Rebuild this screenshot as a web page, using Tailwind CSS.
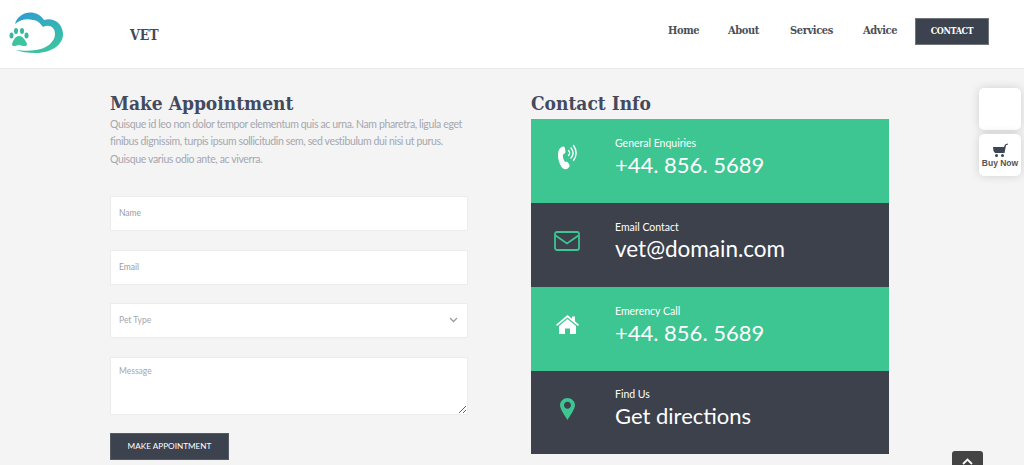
<!DOCTYPE html>
<html lang="en">
<head>
    <meta charset="UTF-8">
    <meta name="viewport" content="width=device-width, initial-scale=1.0">
    <title>Vet - Contact</title>
    <script src="https://cdn.jsdelivr.net/npm/@tailwindcss/browser@4"></script>
</head>
<body class="bg-[#f4f4f4] font-['Lato',sans-serif] h-[465px] overflow-hidden relative">

    <!-- Header -->
    <header class="bg-white h-[69px] border-b border-[#ebebeb] flex items-center">
        <svg class="w-[70px] h-[60px] -mt-[4px] shrink-0" viewBox="0 0 70 60">
            <defs>
                <linearGradient id="logo" x1="0.2" y1="0" x2="0.7" y2="1">
                    <stop offset="0" stop-color="#2f9fd0"/>
                    <stop offset="1" stop-color="#3cc5a0"/>
                </linearGradient>
            </defs>
            <path fill="url(#logo)" d="M15 22C17 14 26 9 34 11C39 12 42 15 44 18C52 15 62 20 63 31C64 42 52 51 36 51C28 51 21 50 16 48C24 49 30 49 36 48C46 47 55 40 55 32C55 25 49 22 43 25C40 21 37 18 33 18C26 16 20 18 15 22Z"/>
            <g fill="#3bb79f">
                <ellipse cx="11.5" cy="33.5" rx="2" ry="3"/>
                <ellipse cx="16" cy="29" rx="2" ry="3"/>
                <ellipse cx="22" cy="29" rx="2" ry="3"/>
                <ellipse cx="26.5" cy="33.5" rx="2" ry="3"/>
                <path fill="#3cc5a0" d="M19 34C23 34 26 39 27 42C27 45 23 44 19 43C15 44 12 45 12 42C13 39 15 34 19 34Z"/>
            </g>
        </svg>
        <span class="font-['DejaVu_Serif',serif] [font-stretch:condensed] font-bold text-[14px] text-[#444a58] ml-[60px] mt-[2px]">VET</span>
        <nav class="ml-auto mr-[35px] -mt-[5px] flex items-center font-['DejaVu_Serif',serif] [font-stretch:condensed] font-bold text-[11px] tracking-[-0.4px] text-[#4b4f58]">
            <a class="w-[29px] mr-[31px] whitespace-nowrap">Home</a>
            <a class="w-[31px] mr-[31px] whitespace-nowrap">About</a>
            <a class="w-[42px] mr-[31px] whitespace-nowrap">Services</a>
            <a class="w-[34px] mr-[18px] whitespace-nowrap">Advice</a>
            <a class="w-[74px] h-[27px] bg-[#3c424e] border border-[#6f747d] text-white text-[9px] flex items-center justify-center">CONTACT</a>
        </nav>
    </header>

    <main class="pl-[110px] flex gap-[63px]">
        <!-- Appointment form -->
        <section class="w-[358px]">
            <h2 class="font-['DejaVu_Serif',serif] [font-stretch:condensed] font-bold text-[19px] leading-[24px] mt-[22px] text-[#444a5e] whitespace-nowrap">Make Appointment</h2>
            <p class="text-[10.5px] tracking-[-0.37px] leading-[17.3px] text-[#a5a7af] mt-[1px] whitespace-nowrap">Quisque id leo non dolor tempor elementum quis ac urna. Nam pharetra, ligula eget<br>finibus dignissim, turpis ipsum sollicitudin sem, sed vestibulum dui nisi ut purus.<br>Quisque varius odio ante, ac viverra.</p>
            <form class="mt-[28px]">
                <input placeholder="Name" class="block w-full h-[35px] bg-white border border-[#ececec] px-[8px] text-[8.5px] placeholder:text-[#9a9ca3]">
                <input placeholder="Email" class="block w-full h-[35px] bg-white border border-[#ececec] px-[8px] text-[8.5px] placeholder:text-[#9a9ca3] mt-[19px]">
                <div class="relative mt-[18px]">
                    <select class="block w-full h-[35px] bg-white border border-[#ececec] px-[8px] text-[8.5px] text-[#a5a7af] appearance-none">
                        <option>Pet Type</option>
                    </select>
                    <svg class="absolute right-[10px] top-[14px] w-[9px] h-[6px]" viewBox="0 0 9 6" fill="none" stroke="#9a9ca3" stroke-width="1.3"><path d="M1 1l3.5 3.5L8 1"/></svg>
                </div>
                <textarea placeholder="Message" class="block w-full h-[58px] bg-white border border-[#ececec] px-[8px] py-[7px] text-[8.5px] placeholder:text-[#a5a7af] mt-[19px]"></textarea>
                <button type="button" class="block w-[119px] h-[27px] bg-[#3c424e] border border-[#555a65] text-white text-[8.2px] mt-[18px]">MAKE APPOINTMENT</button>
            </form>
        </section>

        <!-- Contact info -->
        <section class="w-[358px]">
            <h2 class="font-['DejaVu_Serif',serif] [font-stretch:condensed] font-bold text-[19px] leading-[24px] mt-[22px] text-[#444a5e] whitespace-nowrap">Contact Info</h2>
            <div class="mt-[4px] text-white">
                <div class="h-[84px] bg-[#3dc592] flex items-center">
                    <div class="w-[72px] flex justify-center pl-[1px] -mt-[8px]">
                        <svg class="w-[21px] h-[26px]" viewBox="0 0 21 26" fill="none">
                            <path fill="#fff" d="M5 3C7 2 8 3 8 5L8.500 8C8.500 9 7 10 6 10.500C5.500 13 6.500 16 8 18C9 17.500 10.500 17.500 11 18.500L12.500 21C13 22 12 24 10 25C8 25.800 5.500 25 4 22C1 17 0.500 11 1.500 7C2 5 3.500 3.500 5 3Z"/>
                            <g stroke="#fff" stroke-width="1.400" stroke-linecap="round">
                                <path d="M11.500 6.500C13 8 13 10 11.500 11.500"/>
                                <path d="M14 4C16.500 7 16.500 11 14 14"/>
                                <path d="M16.500 1.500C20 6 20 12 16.500 16.500"/>
                            </g>
                        </svg>
                    </div>
                    <div class="ml-[12px] -mt-[7px]">
                        <div class="text-[10.5px] leading-[14px]">General Enquiries</div>
                        <div class="text-[22px] leading-[30px]">+44. 856. 5689</div>
                    </div>
                </div>
                <div class="h-[84px] bg-[#3c414c] flex items-center">
                    <div class="w-[72px] flex justify-center -mt-[8px]">
                        <svg class="w-[26px] h-[20px]" viewBox="0 0 26 20" fill="none" stroke="#3dc592" stroke-width="1.800"><rect x="1" y="1" width="24" height="18" rx="2"/><path d="M1.500 4.500L13 12.500L24.500 4.500"/></svg>
                    </div>
                    <div class="ml-[12px] -mt-[7px]">
                        <div class="text-[10.5px] leading-[14px]">Email Contact</div>
                        <div class="text-[22.5px] leading-[30px]">vet@domain.com</div>
                    </div>
                </div>
                <div class="h-[84px] bg-[#3dc592] flex items-center">
                    <div class="w-[72px] flex justify-center -mt-[9px]">
                        <svg class="w-[23px] h-[19px]" viewBox="0 0 23 19" fill="#fff"><path d="M11.500 0L16 3.800V1.500H19V6.300L23 9.700L22 10.900L11.500 2.400L1 10.900L0 9.700Z"/><path d="M11.500 4L20 11V19H14V13.500H9V19H3V11Z"/></svg>
                    </div>
                    <div class="ml-[12px] -mt-[7px]">
                        <div class="text-[10.5px] leading-[14px]">Emerency Call</div>
                        <div class="text-[22px] leading-[30px]">+44. 856. 5689</div>
                    </div>
                </div>
                <div class="h-[83px] bg-[#3c414c] flex items-center">
                    <div class="w-[72px] flex justify-center -mt-[8px]">
                        <svg class="w-[15px] h-[22px]" viewBox="0 0 15 22"><path fill="#3dc592" fill-rule="evenodd" d="M7.500 0C11.600 0 15 3.300 15 7.300C15 11 10 18 7.500 22C5 18 0 11 0 7.300C0 3.300 3.400 0 7.500 0ZM7.500 3.800C5.600 3.800 4 5.400 4 7.300C4 9.200 5.600 10.800 7.500 10.800C9.400 10.800 11 9.200 11 7.300C11 5.400 9.400 3.800 7.500 3.800Z"/></svg>
                    </div>
                    <div class="ml-[12px] -mt-[7px]">
                        <div class="text-[10.5px] leading-[14px]">Find Us</div>
                        <div class="text-[22px] leading-[30px]">Get directions</div>
                    </div>
                </div>
            </div>
        </section>
    </main>

    <!-- Floating widgets -->
    <div class="absolute left-[979px] top-[88px] w-[42px] flex flex-col gap-[4px]">
        <div class="h-[42px] bg-white rounded-[5px] shadow-[0_0_10px_rgba(0,0,0,0.15)]"></div>
        <div class="h-[42px] bg-white rounded-[5px] shadow-[0_0_10px_rgba(0,0,0,0.15)] flex flex-col items-center pt-[9px]">
            <svg class="w-[16px] h-[15px]" viewBox="0 0 16 15" fill="#3c4654"><path d="M1 4H12L13 1.500L16 0.500V1.500L14 2.200L12.500 10H3L1.500 8Z"/><circle cx="4.500" cy="12.500" r="1.500"/><circle cx="10.500" cy="12.500" r="1.500"/></svg>
            <span class="font-['Liberation_Sans',sans-serif] font-bold text-[8.5px] leading-[11px] text-[#555] whitespace-nowrap">Buy Now</span>
        </div>
    </div>
    <div class="absolute left-[952px] top-[451px] w-[31px] h-[14px] bg-[#444] rounded-t-[3px] flex justify-center pt-[7px]">
        <svg class="w-[11px] h-[7px]" viewBox="0 0 11 7" fill="none" stroke="#fff" stroke-width="1.800"><path d="M1 6l4.500-4.500L10 6"/></svg>
    </div>
</body>
</html>
